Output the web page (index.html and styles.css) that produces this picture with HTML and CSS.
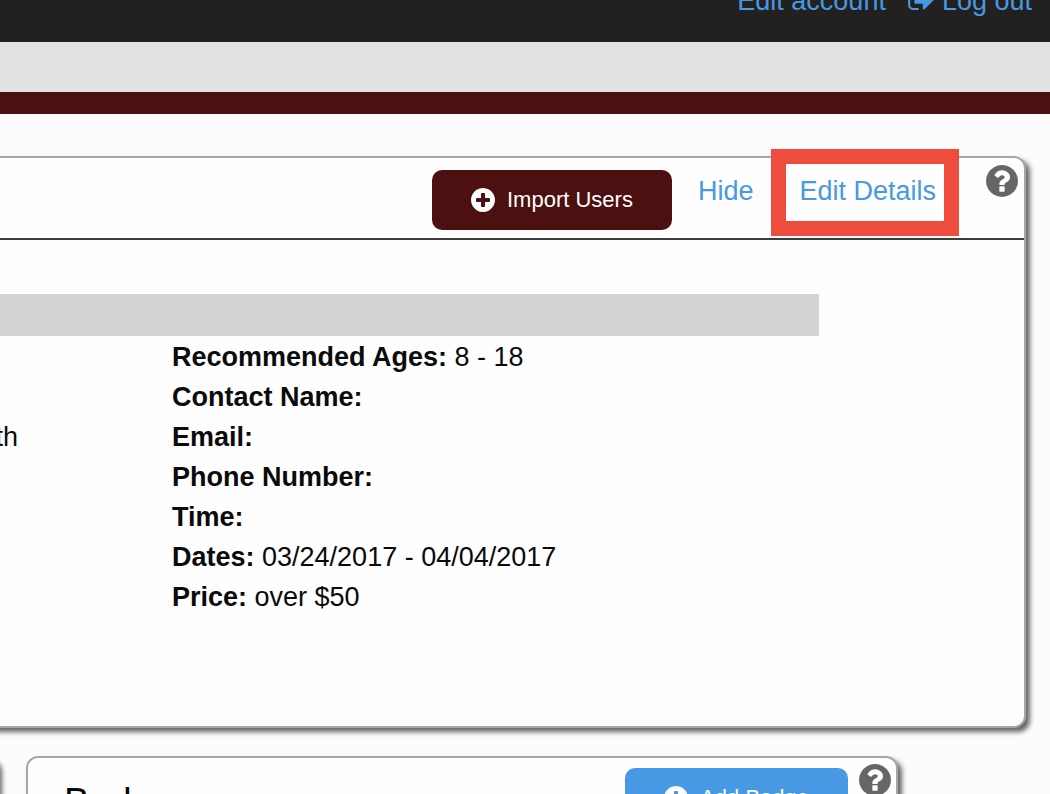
FILE: index.html
```html
<!DOCTYPE html>
<html lang="en">

<head>
    <meta charset="UTF-8">
    <meta name="viewport" content="width=device-width, initial-scale=1.0">
    <title>Program Details</title>
    <link rel="stylesheet" href="styles.css">
</head>

<body>
    <!-- Shared icons -->
    <svg class="icon-defs" aria-hidden="true">
        <symbol id="icon-plus" viewBox="0 128 1536 1536">
            <path d="M1216 960V832q0-26-19-45t-45-19H896V512q0-26-19-45t-45-19H704q-26 0-45 19t-19 45v256H384q-26 0-45 19t-19 45v128q0 26 19 45t45 19h256v256q0 26 19 45t45 19h128q26 0 45-19t19-45v-256h256q26 0 45-19t19-45zm320-64q0 209-103 385.500T1153.500 1561 768 1664t-385.500-103T103 1281.500 0 896t103-385.500T382.500 231 768 128t385.500 103T1433 510.500 1536 896z"/>
        </symbol>
        <symbol id="icon-help" viewBox="128 128 1536 1536">
            <path d="M1024 1376v-192q0-14-9-23t-23-9h-192q-14 0-23 9t-9 23v192q0 14 9 23t23 9h192q14 0 23-9t9-23zm256-672q0-88-55.500-163t-138.500-116-170-41q-243 0-371 213-15 24 8 42l132 100q7 6 19 6 16 0 25-12 53-68 86-92 34-24 86-24 48 0 85.500 26t37.500 59q0 38-20 61t-68 45q-63 28-115.500 86.500t-52.500 125.500v36q0 14 9 23t23 9h192q14 0 23-9t9-23q0-19 21.500-49.500t54.500-49.500q32-18 49-28.500t46-35 44.500-48 28-60.500 12.500-81zm384 192q0 209-103 385.500t-279.500 279.500-385.500 103-385.500-103-279.500-279.500-103-385.500 103-385.500 279.500-279.500 385.500-103 385.500 103 279.500 279.500 103 385.500z"/>
        </symbol>
    </svg>

    <header class="top-bar">
        <a href="#">Edit account</a>
        <a href="#" class="logout">
            <svg class="logout-icon" viewBox="64 256 1568 1280" aria-hidden="true">
                <path d="M704 1440q0 4 1 20t.5 26.500-3 23.500-10 19.500-20.500 6.500h-320q-119 0-203.500-84.500t-84.500-203.500v-704q0-119 84.500-203.500t203.500-84.500h320q13 0 22.500 9.500t9.500 22.500q0 4 1 20t.5 26.500-3 23.500-10 19.500-20.500 6.500h-320q-66 0-113 47t-47 113v704q0 66 47 113t113 47h312l11.500 1 11.500 3 8 5.500 7 9 2 13.500z"/>
                <path d="M1632 896q0 26-19 45l-544 544q-19 19-45 19t-45-19-19-45v-288h-448q-26 0-45-19t-19-45v-384q0-26 19-45t45-19h448v-288q0-26 19-45t45-19 45 19l544 544q19 19 19 45z"/>
            </svg>
            Log out
        </a>
    </header>
    <div class="sub-bar"></div>

    <main>
        <section class="panel details-panel">
            <div class="panel-header">
                <button type="button" class="btn btn-import">
                    <svg class="btn-icon" aria-hidden="true"><use href="#icon-plus"/></svg>
                    Import Users
                </button>
                <a href="#" class="hide-link">Hide</a>
                <a href="#" class="edit-link">Edit Details</a>
                <button type="button" class="help" aria-label="Help">
                    <svg aria-hidden="true"><use href="#icon-help"/></svg>
                </button>
            </div>
            <div class="title-strip"></div>
            <div class="details">
                <div class="location">th</div>
                <ul class="info">
                    <li><strong>Recommended Ages:</strong> 8 - 18</li>
                    <li><strong>Contact Name:</strong></li>
                    <li><strong>Email:</strong></li>
                    <li><strong>Phone Number:</strong></li>
                    <li><strong>Time:</strong></li>
                    <li><strong>Dates:</strong> 03/24/2017 - 04/04/2017</li>
                    <li><strong>Price:</strong> over $50</li>
                </ul>
            </div>
        </section>

        <div class="panel-row">
            <section class="panel side-panel"></section>
            <section class="panel badges-panel">
                <h2>Badges</h2>
                <button type="button" class="btn btn-badge">
                    <svg class="btn-icon" aria-hidden="true"><use href="#icon-plus"/></svg>
                    Add Badge
                </button>
                <button type="button" class="help" aria-label="Help">
                    <svg aria-hidden="true"><use href="#icon-help"/></svg>
                </button>
            </section>
        </div>
    </main>
</body>

</html>
```
FILE: styles.css
```css
* {
    margin: 0;
    padding: 0;
    box-sizing: border-box;
}

body {
    height: 100vh;
    overflow: hidden;
    background-color: #fcfcfc;
    color: #0a0a0a;
    font-family: "Liberation Sans", Arial, sans-serif;
    font-size: 27px;
    line-height: 40px;
}

a {
    color: #4799e3;
    text-decoration: none;
}

svg {
    display: block;
    fill: currentColor;
}

.icon-defs {
    display: none;
}

/* Header */
.top-bar {
    display: flex;
    justify-content: flex-end;
    align-items: flex-end;
    gap: 22px;
    height: 42px;
    padding: 0 18px 21px 0;
    background-color: #22211f;
}

.logout {
    display: flex;
    align-items: center;
    gap: 8px;
}

.logout-icon {
    width: 26px;
    height: 21px;
    margin-bottom: 4px;
}

.sub-bar {
    height: 72px;
    background-color: #e1e2e4;
    border-bottom: 22px solid #4c1010;
}

/* Panels */
.panel {
    background-color: #fefefe;
    border: 2px solid #a6a6a6;
    border-radius: 12px;
    box-shadow: 4px 4px 5px #666;
}

.details-panel {
    margin: 42px 24px 28px -20px;
    padding: 0 0 109px 18px;
}

.panel-header {
    display: flex;
    justify-content: flex-end;
    align-items: flex-start;
    margin-left: -18px;
    padding: 12px 6px 8px 0;
    border-bottom: 2px solid #3e3c3d;
}

.btn {
    display: flex;
    align-items: center;
    gap: 12px;
    height: 60px;
    padding: 0 39px;
    border: none;
    border-radius: 10px;
    color: #fefefe;
    font-family: inherit;
    font-size: 22px;
    cursor: pointer;
}

.btn-import {
    background-color: #4c1010;
}

.btn-badge {
    background-color: #4799e3;
}

.btn-icon {
    width: 24px;
    height: 24px;
}

.hide-link {
    margin: 1px 46px 0 26px;
}

.edit-link {
    position: relative;
    margin: 1px 50px 0 0;
}

/* Highlight frame around the link */
.edit-link::after {
    content: "";
    position: absolute;
    inset: -22px -23px -25px -28px;
    border: 15px solid #ee4d3d;
    pointer-events: none;
}

.help {
    width: 32px;
    height: 32px;
    margin-top: -5px;
    border: none;
    background: none;
    color: #666;
    cursor: pointer;
}

.help svg {
    width: 32px;
    height: 32px;
}

/* Details */
.title-strip {
    width: 80%;
    height: 42px;
    margin-top: 54px;
    background-color: #d3d3d3;
}

.details {
    display: flex;
    padding-top: 1px;
}

.location {
    display: flex;
    justify-content: flex-end;
    width: 18px;
    margin-right: 154px;
    padding-top: 80px;
    overflow: hidden;
}

.info {
    list-style: none;
}

/* Lower row */
.panel-row {
    display: flex;
    gap: 28px;
    margin: 0 152px 0 -30px;
}

.side-panel {
    width: 28px;
}

.badges-panel {
    flex: 1;
    display: flex;
    align-items: flex-start;
    height: 400px;
    padding: 10px 5px 0 36px;
}

.badges-panel h2 {
    flex: 1;
    padding-top: 14px;
    font-size: 38px;
    font-weight: normal;
}

.badges-panel .help {
    margin: -4px 0 0 11px;
}
```
